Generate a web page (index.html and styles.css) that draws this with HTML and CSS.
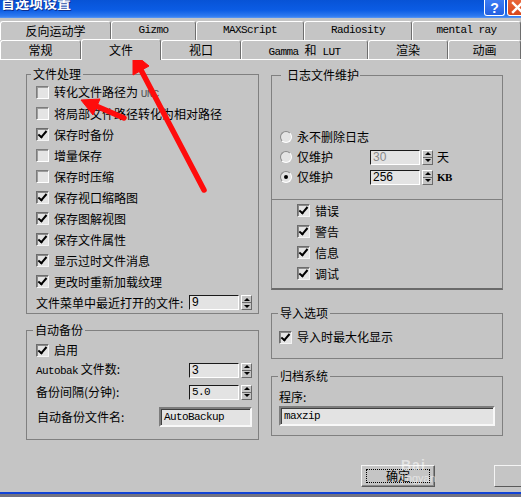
FILE: index.html
```html
<!DOCTYPE html>
<html lang="zh-CN">
<head>
<meta charset="utf-8">
<title>首选项设置</title>
<link rel="stylesheet" href="styles.css">
</head>
<body>
<div class="titlebar">
  <span class="title">首选项设置</span>
  <span class="tb-btn help">?</span>
  <span class="tb-btn close"><svg width="13" height="13" viewBox="0 0 13 13"><path d="M2 2 L11 11 M11 2 L2 11" stroke="#fff" stroke-width="2.4" stroke-linecap="square"/></svg></span>
</div>

<div class="tabs">
  <div class="trow">
    <div class="tab r1a">反向运动学</div>
    <div class="tab r1b mono">Gizmo</div>
    <div class="tab r1c mono">MAXScript</div>
    <div class="tab r1d mono">Radiosity</div>
    <div class="tab r1e mono">mental ray</div>
  </div>
  <div class="trow">
    <div class="tab r2a">常规</div>
    <div class="tab r2b sel">文件</div>
    <div class="tab r2c">视口</div>
    <div class="tab r2d"><span class="mono">Gamma </span>和<span class="mono"> LUT</span></div>
    <div class="tab r2e">渲染</div>
    <div class="tab r2f">动画</div>
  </div>
</div>

<div class="panel">
  <div class="col">
    <fieldset class="grp g-file">
      <legend>文件处理</legend>
      <div class="gb">
        <div class="row"><span class="cb"></span><span>转化文件路径为 <span class="mono unc">UNC</span></span></div>
        <div class="row"><span class="cb"></span><span>将局部文件路径转化为相对路径</span></div>
        <div class="row"><span class="cb on"></span><span>保存时备份</span></div>
        <div class="row"><span class="cb"></span><span>增量保存</span></div>
        <div class="row"><span class="cb"></span><span>保存时压缩</span></div>
        <div class="row"><span class="cb on"></span><span>保存视口缩略图</span></div>
        <div class="row"><span class="cb on"></span><span>保存图解视图</span></div>
        <div class="row"><span class="cb on"></span><span>保存文件属性</span></div>
        <div class="row"><span class="cb on"></span><span>显示过时文件消息</span></div>
        <div class="row"><span class="cb on"></span><span>更改时重新加载纹理</span></div>
        <div class="row split">
          <span>文件菜单中最近打开的文件:</span>
          <span class="spin"><span class="inp num">9</span><span class="arrows"><span class="up"></span><span class="dn"></span></span></span>
        </div>
      </div>
    </fieldset>

    <fieldset class="grp g-auto">
      <legend>自动备份</legend>
      <div class="gb">
        <div class="row a1"><span class="cb on"></span><span>启用</span></div>
        <div class="row split a2">
          <span><span class="mono">Autobak</span> 文件数:</span>
          <span class="spin"><span class="inp num">3</span><span class="arrows"><span class="up"></span><span class="dn"></span></span></span>
        </div>
        <div class="row split a3">
          <span>备份间隔(分钟):</span>
          <span class="spin"><span class="inp mono">5.0</span><span class="arrows"><span class="up"></span><span class="dn"></span></span></span>
        </div>
        <div class="row split a4">
          <span class="lbl4">自动备份文件名:</span>
          <span class="inp big mono">AutoBackup</span>
        </div>
      </div>
    </fieldset>
  </div>

  <div class="col">
    <fieldset class="grp g-log">
      <legend>日志文件维护</legend>
      <div class="radios">
        <div class="row rr"><span class="rb"></span><span>永不删除日志</span></div>
        <div class="row rr"><span class="rb"></span><span class="rlabel">仅维护</span><span class="spin"><span class="inp num dis">30</span><span class="arrows"><span class="up"></span><span class="dn"></span></span></span><span class="unit">天</span></div>
        <div class="row rr"><span class="rb on"></span><span class="rlabel">仅维护</span><span class="spin"><span class="inp num">256</span><span class="arrows"><span class="up"></span><span class="dn"></span></span></span><span class="unit kb">KB</span></div>
      </div>
      <div class="levels">
        <div class="row"><span class="cb on"></span><span>错误</span></div>
        <div class="row"><span class="cb on"></span><span>警告</span></div>
        <div class="row"><span class="cb on"></span><span>信息</span></div>
        <div class="row"><span class="cb on"></span><span>调试</span></div>
      </div>
    </fieldset>

    <fieldset class="grp g-imp">
      <legend>导入选项</legend>
      <div class="gb">
        <div class="row"><span class="cb on"></span><span>导入时最大化显示</span></div>
      </div>
    </fieldset>

    <fieldset class="grp g-arc">
      <legend>归档系统</legend>
      <div class="gb">
        <div class="prog">程序:</div>
        <div class="inp big wide mono">maxzip</div>
      </div>
    </fieldset>
  </div>
</div>

<div class="footer">
  <div class="btn def"><span class="focus">确定</span></div>
  <div class="btn"></div>
</div>
<div class="taskbar"></div>

<div class="wm"><span class="wm1">Bai</span><span class="wm2">jingyan</span></div>

<svg class="arrows-overlay" width="521" height="497" viewBox="0 0 521 497">
  <g fill="#ff0c0c" stroke="#ff0c0c">
    <line x1="204" y1="190" x2="141" y2="70" stroke-width="5.5" stroke-linecap="round"/>
    <polygon points="133,53 149,66 133,75" stroke-width="1" stroke-linejoin="round"/>
    <line x1="124" y1="118" x2="96" y2="106" stroke-width="5.5" stroke-linecap="round"/>
    <polygon points="81,100 100,99 93,115" stroke-width="1" stroke-linejoin="round"/>
  </g>
</svg>
</body>
</html>
```

FILE: styles.css
```css
* { box-sizing: border-box; }
html, body { margin: 0; padding: 0; }
body {
  width: 521px;
  height: 497px;
  overflow: hidden;
  position: relative;
  background: #c5c5c5;
  color: #000;
  font-family: "Noto Sans CJK SC", "Liberation Sans", sans-serif;
  font-size: 12px;
  line-height: 14px;
}
.mono {
  font-family: "Liberation Mono", "Noto Sans CJK SC", monospace;
  font-size: 11px;
  letter-spacing: -0.6px;
}

/* title bar */
.titlebar {
  height: 18px;
  display: flex;
  align-items: flex-start;
  overflow: hidden;
  background: linear-gradient(#0753d6, #0b5ce4 55%, #2f7af0 90%, #5a98f5);
}
.title {
  flex: 1;
  min-width: 0;
  color: #fff;
  font-weight: bold;
  font-size: 14px;
  line-height: 14px;
  margin-top: -5px;
  padding-left: 1px;
  text-shadow: 1px 1px 0 #0b2d8c;
}
.tb-btn {
  flex-shrink: 0;
  width: 21px;
  height: 16px;
  border: 1px solid #fff;
  border-top: none;
  border-radius: 0 0 3px 3px;
  display: flex;
  align-items: center;
  justify-content: center;
}
.help {
  margin-right: 2px;
  background: linear-gradient(#3b7cf4, #2460e0);
  color: #fff;
  font-family: "Liberation Sans", sans-serif;
  font-weight: bold;
  font-size: 14px;
}
.close {
  margin-right: -7px;
  background: linear-gradient(#e8663a, #d9461a);
  justify-content: flex-start;
  padding-left: 3px;
}

/* tabs */
.tabs { margin-top: 3px; }
.trow { display: flex; height: 19px; }
.tab {
  flex-shrink: 0;
  height: 19px;
  border-top: 1px solid #fff;
  border-left: 1px solid #fff;
  border-right: 1px solid #6e6e6e;
  border-radius: 3px 3px 0 0;
  text-align: center;
  line-height: 17px;
  background: #c5c5c5;
  white-space: nowrap;
}
.r1a { width: 111px; }
.r1b { width: 85px; }
.r1c { width: 108px; }
.r1d { width: 108px; }
.r1e { width: 109px; }
.r2a { width: 81px; }
.r2b { width: 80px; }
.r2c { width: 80px; }
.r2d { width: 127px; }
.r2e { width: 80px; }
.r2f { width: 73px; }
.tab.sel {
  position: relative;
  z-index: 1;
  height: 21px;
  margin-top: -1px;
  line-height: 19px;
}

/* panel */
.panel {
  border-top: 1px solid #fff;
  display: grid;
  grid-template-columns: 233px 232px;
  column-gap: 12px;
  align-items: start;
  padding: 7px 0 0 26px;
}
.col { display: flex; flex-direction: column; }

.grp {
  margin: 0;
  padding: 0;
  min-width: 0;
  border: 1px solid #808080;
}
.grp legend {
  margin-left: 4px;
  padding: 0 2px;
  height: 14px;
  line-height: 14px;
}
.row {
  display: flex;
  align-items: center;
  height: 21px;
  white-space: nowrap;
}
.row.split { justify-content: space-between; }

.g-file .gb { padding: 1px 6px 0 9px; }
.g-auto { margin-top: 9px; }
.g-auto legend { margin-left: 6px; }
.g-auto .gb { padding: 3px 6px 9px 9px; }
.a1, .a2 { height: 20px; }
.a3 { height: 24px; }
.a4 { height: 26px; }
.lbl4 { padding-left: 1px; }

.g-log { margin-top: 1px; border-bottom: 2px solid #6a6a6a; }
.g-log legend { margin-left: 9px; padding: 0 1px 0 6px; }
.radios { padding: 45px 0 0 8px; }
.rr { height: 20px; }
.levels {
  margin-top: 12px;
  border-top: 1px solid #808080;
  padding: 0 0 4px 25px;
}
.g-imp { margin-top: 16px; }
.g-imp legend, .g-arc legend { margin-left: 6px; }
.g-imp .gb { padding: 7px 0 11px 7px; }
.g-imp .row { height: 20px; }
.g-arc { margin-top: 10px; }
.g-arc .gb { padding: 5px 7px 9px 7px; }
.prog { height: 18px; line-height: 18px; }

/* checkbox */
.cb {
  position: relative;
  flex-shrink: 0;
  width: 13px;
  height: 13px;
  margin-right: 5px;
  background: #e4e4e4;
  border-style: solid;
  border-width: 1px;
  border-color: #7c7c7c #fff #fff #7c7c7c;
  box-shadow: inset 1px 1px 0 #9c9c9c;
}
.cb.on { border-color: #6c6c6c #f4f4f4 #f4f4f4 #6c6c6c; box-shadow: inset 1px 1px 0 #8a8a8a; }
.cb.on::after {
  content: "";
  position: absolute;
  left: 3px;
  top: 0px;
  width: 3px;
  height: 7px;
  border: solid #000;
  border-width: 0 2px 2px 0;
  transform: rotate(40deg);
}

/* radio */
.rb {
  flex-shrink: 0;
  width: 12px;
  height: 12px;
  margin-right: 5px;
  border-radius: 50%;
  background: #e4e4e4;
  border: 1px solid;
  border-color: #8a8a8a #fff #fff #8a8a8a;
  display: flex;
  align-items: center;
  justify-content: center;
}
.rb.on::after {
  content: "";
  width: 4px;
  height: 4px;
  border-radius: 50%;
  background: #000;
}
.rlabel { width: 73px; }
.unit { margin-left: 4px; }
.kb {
  font-family: "Liberation Serif", serif;
  font-weight: bold;
  font-size: 11px;
  letter-spacing: -0.5px;
}

/* inputs + spinners */
.spin { display: flex; align-items: stretch; }
.inp {
  display: block;
  width: 50px;
  height: 15px;
  background: #e3e3e3;
  border-style: solid;
  border-width: 1px;
  border-color: #1a1a1a #fff #fff #1a1a1a;
  padding-left: 2px;
  line-height: 13px;
}
.num { font-family: "Liberation Sans", sans-serif; font-size: 12px; }
.dis { color: #8a8a8a; }
.inp.big {
  width: 93px;
  height: 20px;
  border-width: 2px;
  border-color: #7c7c7c #f8f8f8 #f8f8f8 #7c7c7c;
  box-shadow: inset 1px 1px 0 #404040;
  line-height: 16px;
  padding-left: 3px;
}
.inp.wide { width: 216px; }
.arrows {
  width: 11px;
  margin-left: 2px;
  display: flex;
  flex-direction: column;
  border: 1px solid;
  border-color: #fff #6a6a6a #6a6a6a #fff;
}
.up, .dn {
  flex: 1;
  display: flex;
  align-items: center;
  justify-content: center;
}
.up { border-bottom: 1px solid #6a6a6a; }
.up::before, .dn::before {
  content: "";
  width: 0;
  height: 0;
  border-left: 3px solid transparent;
  border-right: 3px solid transparent;
}
.up::before { border-bottom: 3px solid #000; }
.dn::before { border-top: 3px solid #000; }
.unc { color: #555; }

/* footer */
.footer {
  display: flex;
  gap: 59px;
  margin-top: 25px;
  padding-left: 361px;
}
.btn {
  flex-shrink: 0;
  width: 74px;
  height: 22px;
  border: 1px solid;
  border-color: #f4f4f4 #5a5a5a #5a5a5a #f4f4f4;
  display: flex;
  align-items: center;
  justify-content: center;
}
.btn.def { box-shadow: inset -1px -1px 0 #8a8a8a; }
.focus {
  width: 64px;
  height: 14px;
  border: 1px dotted #000;
  text-align: center;
  line-height: 12px;
}
.taskbar {
  margin-top: 5px;
  height: 5px;
  border-top: 2px solid #1244d6;
  background: #727282;
}

/* watermark */
.wm {
  position: absolute;
  left: 401px;
  top: 458px;
  display: flex;
  flex-direction: column;
  color: rgba(255, 255, 255, 0.55);
  font-family: "Liberation Sans", sans-serif;
  pointer-events: none;
}
.wm1 { font-weight: bold; font-size: 14px; line-height: 14px; letter-spacing: 1px; }
.wm2 { font-size: 11px; line-height: 12px; }

.arrows-overlay {
  position: absolute;
  left: 0;
  top: 0;
  pointer-events: none;
}
```
